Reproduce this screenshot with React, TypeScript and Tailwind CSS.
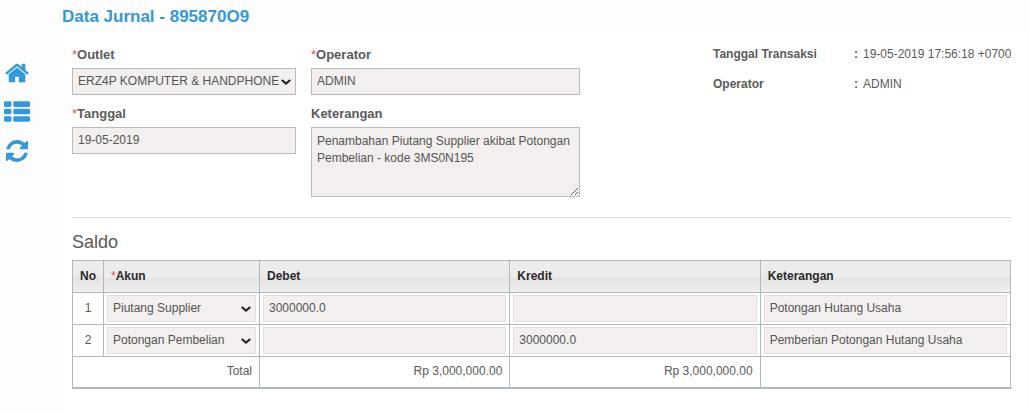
import { useState } from 'react'
import type { ComponentProps, ReactNode } from 'react'

const inputBase = 'block w-full h-[27px] border bg-[#f3efee] px-[5px] pb-0.5 text-xs text-[#555] outline-none'
const fieldInput = `${inputBase} border-[#bbb]`
const cellInput = `${inputBase} border-[#e2dedd]`

const initialRows = [
  { no: 1, akun: 'Piutang Supplier', debet: '3000000.0', kredit: '', keterangan: 'Potongan Hutang Usaha' },
  { no: 2, akun: 'Potongan Pembelian', debet: '', kredit: '3000000.0', keterangan: 'Pemberian Potongan Hutang Usaha' },
]

const akunOptions = ['Piutang Supplier', 'Potongan Pembelian']

function Required() {
  return <span className="font-normal text-[#e84c4c]">*</span>
}

function Field({ id, label, required, children }: { id: string; label: string; required?: boolean; children: ReactNode }) {
  return (
    <div>
      <label htmlFor={id} className="block mb-1 text-[13px] leading-[18px] font-bold text-[#5a5a5a]">
        {required && <Required />}
        {label}
      </label>
      {children}
    </div>
  )
}

function Select({ className, ...props }: ComponentProps<'select'>) {
  return (
    <div className="relative">
      <select className={`${className} appearance-none`} {...props} />
      <svg viewBox="0 0 10 6" className="pointer-events-none absolute top-[11px] right-[5px] h-1.5 w-2.5 fill-none stroke-[#222]">
        <path d="M.7 .9l4.300 3.700L9.300 .9" strokeWidth="2" />
      </svg>
    </div>
  )
}

function Sidebar() {
  return (
    <nav className="w-[57px] shrink-0 pt-[60px] pl-1 text-[#3498db]">
      <div className="flex w-[26px] flex-col items-center gap-[13px]">
        <a href="#home" aria-label="Home">
          <svg viewBox="0 0 1664 1792" className="h-[26px] w-6 fill-current">
            <path d="M1408 992v480q0 26-19 45t-45 19h-384v-384h-256v384h-384q-26 0-45-19t-19-45v-480q0-1 .5-3t.5-3l575-474 575 474q1 2 1 6zm223-69l-62 74q-8 9-21 11h-3q-13 0-21-7l-692-577-692 577q-12 8-24 7-13-2-21-11l-62-74q-8-10-7-23.5t11-21.5l719-599q32-26 76-26t76 26l244 204v-195q0-14 9-23t23-9h192q14 0 23 9t9 23v408l219 182q10 8 11 21.5t-7 23.5z" />
          </svg>
        </a>
        <a href="#list" aria-label="List">
          <svg viewBox="0 0 1792 1792" className="size-[26px] fill-current">
            <rect x="0" y="160" width="512" height="384" rx="80" />
            <rect x="640" y="160" width="1152" height="384" rx="80" />
            <rect x="0" y="672" width="512" height="384" rx="80" />
            <rect x="640" y="672" width="1152" height="384" rx="80" />
            <rect x="0" y="1184" width="512" height="384" rx="80" />
            <rect x="640" y="1184" width="1152" height="384" rx="80" />
          </svg>
        </a>
        <a href="#refresh" aria-label="Refresh">
          <svg viewBox="0 -128 1536 1792" className="h-[26px] w-[22px] fill-current">
            <path d="M1511 928q0 5-1 7-64 268-268 434.500t-478 166.500q-146 0-282.500-55t-243.500-157l-129 129q-19 19-45 19t-45-19-19-45v-448q0-26 19-45t45-19h448q26 0 45 19t19 45-19 45l-137 137q71 66 161 102t187 36q134 0 250-65t186-179q11-17 53-117 8-23 30-23h192q13 0 22.500 9.500t9.500 22.500zm25-800v448q0 26-19 45t-45 19h-448q-26 0-45-19t-19-45 19-45l138-138q-148-137-349-137-134 0-250 65t-186 179q-11 17-53 117-8 23-30 23h-199q-13 0-22.500-9.500t-9.500-22.500v-7q65-268 270-434.500t480-166.500q146 0 284 55.500t245 156.500l130-129q19-19 45-19t45 19 19 45z" />
          </svg>
        </a>
      </div>
    </nav>
  )
}

function SaldoTable() {
  const [rows, setRows] = useState(initialRows)

  const setAkun = (no: number, akun: string) => {
    setRows(rows.map((row) => (row.no === no ? { ...row, akun } : row)))
  }

  const head = 'h-8 border border-[#aeb8be] px-[7px] pb-0.5 text-left font-bold text-[#2a2a2a]'
  const cell = 'h-8 border border-[#aeb8be] px-[3px] py-0.5'
  const total = 'h-[31px] border border-[#aeb8be] px-[7px] pb-[3px] text-right'

  return (
    <div className="border-b border-[#aeb8be] pr-px">
      <table className="w-full table-fixed border-collapse text-xs">
        <colgroup>
          <col className="w-[31px]" />
          <col className="w-[156px]" />
          <col />
          <col />
          <col />
        </colgroup>
        <thead>
          <tr className="bg-linear-to-b from-[#ececec] from-50% via-[#e3e3e3] via-55% to-[#f0f0f0]">
            <th className={head}>No</th>
            <th className={head}><Required />Akun</th>
            <th className={head}>Debet</th>
            <th className={head}>Kredit</th>
            <th className={head}>Keterangan</th>
          </tr>
        </thead>
        <tbody>
          {rows.map((row) => (
            <tr key={row.no}>
              <td className="h-8 border border-[#aeb8be] pb-0.5 text-center">{row.no}</td>
              <td className={cell}>
                <Select
                  aria-label={`Akun ${row.no}`}
                  className={cellInput}
                  value={row.akun}
                  onChange={(e) => setAkun(row.no, e.target.value)}
                >
                  {akunOptions.map((akun) => (
                    <option key={akun}>{akun}</option>
                  ))}
                </Select>
              </td>
              <td className={cell}>
                <input aria-label={`Debet ${row.no}`} className={cellInput} defaultValue={row.debet} readOnly />
              </td>
              <td className={cell}>
                <input aria-label={`Kredit ${row.no}`} className={cellInput} defaultValue={row.kredit} readOnly />
              </td>
              <td className={cell}>
                <input aria-label={`Keterangan ${row.no}`} className={cellInput} defaultValue={row.keterangan} readOnly />
              </td>
            </tr>
          ))}
          <tr>
            <td colSpan={2} className={total}>Total</td>
            <td className={total}>Rp 3,000,000.00</td>
            <td className={total}>Rp 3,000,000.00</td>
            <td className={total}></td>
          </tr>
        </tbody>
      </table>
    </div>
  )
}

export default function App() {
  return (
    <div className="flex min-h-screen bg-[#fdfdfd] font-['Liberation_Sans',Arial,sans-serif] text-xs text-[#5a5a5a]">
      <Sidebar />

      <div className="flex min-w-0 flex-1 flex-col">
        <header className="h-[31px] pt-[5px] pl-[5px]">
          <h1 className="text-[17px] leading-6 font-bold text-[#3498db]">Data Jurnal - 895870O9</h1>
        </header>

        <main className="flex-1 border-r border-[#fafafa] bg-white pt-[15px] pr-4 pl-[15px]">
          <div className="flex items-start justify-between">
            <div className="flex gap-[15px]">
              <div className="flex w-56 flex-col gap-2.5">
                <Field id="outlet" label="Outlet" required>
                  <Select id="outlet" className={fieldInput}>
                    <option>ERZ4P KOMPUTER &amp; HANDPHONE</option>
                  </Select>
                </Field>
                <Field id="tanggal" label="Tanggal" required>
                  <input id="tanggal" className={fieldInput} defaultValue="19-05-2019" readOnly />
                </Field>
              </div>
              <div className="flex w-[269px] flex-col gap-2.5">
                <Field id="operator" label="Operator" required>
                  <input id="operator" className={fieldInput} defaultValue="ADMIN" readOnly />
                </Field>
                <Field id="keterangan" label="Keterangan">
                  <textarea
                    id="keterangan"
                    className="block h-[70px] w-full border border-[#bbb] bg-[#f3efee] p-[5px] leading-[17px] text-[#555] outline-none"
                    defaultValue="Penambahan Piutang Supplier akibat Potongan Pembelian - kode 3MS0N195"
                    readOnly
                  />
                </Field>
              </div>
            </div>

            <dl className="grid w-[299px] grid-cols-[141px_1fr] gap-y-3.5 leading-4">
              <dt className="font-bold">Tanggal Transaksi</dt>
              <dd className="whitespace-nowrap"><b className="mr-[5px]">:</b>19-05-2019 17:56:18 +0700</dd>
              <dt className="font-bold">Operator</dt>
              <dd><b className="mr-[5px]">:</b>ADMIN</dd>
            </dl>
          </div>

          <hr className="mt-5 border-[#ddd]" />

          <h2 className="mt-3 mb-1.5 text-lg leading-6">Saldo</h2>
          <SaldoTable />
        </main>
      </div>
    </div>
  )
}
